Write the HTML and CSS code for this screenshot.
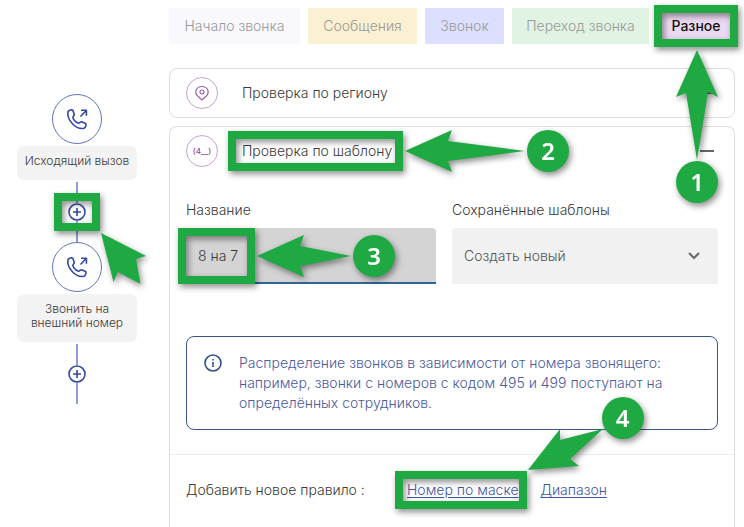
FILE: index.html
```html
<!DOCTYPE html>
<html lang="ru">
<head>
  <meta charset="UTF-8">
  <meta name="viewport" content="width=device-width, initial-scale=1.0">
  <title>Проверка по шаблону</title>
  <link rel="stylesheet" href="styles.css">
</head>
<body>
  <div class="page">
    <aside class="flow">
      <div class="flow-icon">
        <svg width="24" height="24" viewBox="0 0 24 24"><path d="M3 4.500C4 3 6.500 2.500 7.800 3.300L9.300 7.500C9.400 8.600 7.600 9.400 7.800 10.600C8.600 13 11 15.400 13.400 16.200C14.600 16.400 15.400 14.600 16.500 14.700L20.700 16.400C21.500 18 20.600 20.500 19 21.300C11 23 1.500 13 3 4.500Z"/><path d="M15.500 9.500L21.200 3.500M16 3.200H21.400V8.700"/></svg>
      </div>
      <div class="flow-label">Исходящий вызов</div>
      <div class="connector">
        <button class="add-step" aria-label="Добавить">
          <svg width="18" height="18" viewBox="0 0 18 18"><circle cx="9" cy="9" r="8"/><path d="M5 9H13M9 5V13"/></svg>
          <span class="mark mark-add">
            <svg class="arrow" width="46" height="52" viewBox="0 0 46 52"><path d="M0 0L45 23L35 26L39.500 51L17 39L12.500 49Z"/></svg>
          </span>
        </button>
      </div>
      <div class="flow-icon">
        <svg width="24" height="24" viewBox="0 0 24 24"><path d="M3 4.500C4 3 6.500 2.500 7.800 3.300L9.300 7.500C9.400 8.600 7.600 9.400 7.800 10.600C8.600 13 11 15.400 13.400 16.200C14.600 16.400 15.400 14.600 16.500 14.700L20.700 16.400C21.500 18 20.600 20.500 19 21.300C11 23 1.500 13 3 4.500Z"/><path d="M15.500 9.500L21.200 3.500M16 3.200H21.400V8.700"/></svg>
      </div>
      <div class="flow-label">Звонить на<br>внешний номер</div>
      <div class="connector">
        <button class="add-step" aria-label="Добавить">
          <svg width="18" height="18" viewBox="0 0 18 18"><circle cx="9" cy="9" r="8"/><path d="M5 9H13M9 5V13"/></svg>
        </button>
      </div>
    </aside>

    <main class="content">
      <nav class="tabs">
        <button class="tab tab-start">Начало звонка</button>
        <button class="tab tab-messages">Сообщения</button>
        <button class="tab tab-call">Звонок</button>
        <button class="tab tab-transfer">Переход звонка</button>
        <button class="tab tab-misc">Разное
          <span class="mark mark-tab">
            <svg class="arrow" width="42" height="110" viewBox="0 0 42 110"><path d="M21 0L42 47L32 42L21 110L10 43L0 47Z"/></svg>
            <span class="badge">1</span>
          </span>
        </button>
      </nav>

      <section class="card">
        <button class="card-header">
          <span class="card-icon">
            <svg width="16" height="16" viewBox="0 0 16 16"><path d="M8 15L3.500 10.800C0 7 2.500 1.500 8 1.500S16 7 12.500 10.800Z"/><circle cx="8" cy="7" r="2"/></svg>
          </span>
          <span>Проверка по региону</span>
          <span class="toggle"></span>
        </button>
      </section>

      <section class="card card-open">
        <button class="card-header">
          <span class="card-icon">(4__)</span>
          <span class="target">Проверка по шаблону
            <span class="mark mark-title">
              <svg class="arrow" width="120" height="42" viewBox="0 0 120 42"><path d="M0 21L47 0L43 11L120 21L43 31L47 42Z"/></svg>
              <span class="badge">2</span>
            </span>
          </span>
          <span class="toggle"></span>
        </button>

        <div class="fields">
          <div class="field field-name">
            <label for="name">Название</label>
            <div class="control">
              <input id="name" type="text" value="8 на 7">
              <span class="mark mark-input">
                <svg class="arrow" width="94" height="42" viewBox="0 0 94 42"><path d="M0 21L47 0L43 11L94 21L43 31L47 42Z"/></svg>
                <span class="badge">3</span>
              </span>
            </div>
          </div>
          <div class="field field-saved">
            <label for="saved">Сохранённые шаблоны</label>
            <div class="control">
              <select id="saved">
                <option>Создать новый</option>
              </select>
              <svg class="chevron" width="12" height="8" viewBox="0 0 12 8"><path d="M1 1L6 6L11 1"/></svg>
            </div>
          </div>
        </div>

        <div class="info">
          <svg class="info-icon" width="18" height="18" viewBox="0 0 18 18"><circle cx="9" cy="9" r="8"/><path d="M9 8V13M9 5V6.500"/></svg>
          <p>Распределение звонков в зависимости от номера звонящего: например, звонки с номеров с кодом 495 и 499 поступают на определённых сотрудников.</p>
        </div>

        <div class="rules">
          <span class="rules-title">Добавить новое правило :</span>
          <a class="target" href="#mask">Номер по маске<span class="mark mark-link">
              <svg class="arrow" width="76" height="42" viewBox="0 0 76 42"><path d="M0 41L32 0V11L75 0L42 30L51 37Z"/></svg>
              <span class="badge">4</span>
            </span></a>
          <a href="#range">Диапазон</a>
        </div>
      </section>
    </main>
  </div>
</body>
</html>
```

FILE: styles.css
```css
* {
  box-sizing: border-box;
}

body {
  margin: 0;
  background: #fff;
  color: #3a3a3a;
  font-family: Inter, 'Open Sans', sans-serif;
  font-size: 14px;
  font-weight: 300;
  line-height: 20px;
}

button,
input,
select {
  font: inherit;
  color: inherit;
  border: none;
}

button {
  cursor: pointer;
}

svg {
  display: block;
  fill: none;
}

.page {
  display: flex;
  gap: 32px;
  min-height: 100vh;
  padding: 8px 9px 0 17px;
}

/* call scheme */
.flow {
  flex: 0 0 120px;
  display: flex;
  flex-direction: column;
  align-items: center;
  padding-top: 86px;
}

.flow-icon {
  display: flex;
  align-items: center;
  justify-content: center;
  width: 50px;
  height: 50px;
  border: 1px solid #6274b5;
  border-radius: 50%;
}

.flow-icon svg {
  stroke: #3148a8;
  stroke-width: 1.6;
  stroke-linejoin: round;
}

.flow-label {
  width: 100%;
  margin: 2px 0;
  padding: 8px 4px 12px;
  border-radius: 7px;
  background: #f3f3f3;
  font-size: 12px;
  line-height: 14px;
  text-align: center;
}

.connector {
  display: flex;
  align-items: center;
  justify-content: center;
  width: 18px;
  height: 60px;
  background: linear-gradient(#909dd3, #909dd3) center / 2px 100% no-repeat;
}

.add-step {
  position: relative;
  padding: 0;
  border-radius: 50%;
  background: #fff;
}

.add-step > svg {
  stroke: #33489f;
  stroke-width: 1.6;
}

/* tabs */
.content {
  flex: 1;
  min-width: 0;
  display: flex;
  flex-direction: column;
  gap: 8px;
}

.tabs {
  display: flex;
  gap: 8px;
  margin-bottom: 16px;
}

.tab {
  position: relative;
  height: 36px;
  padding: 0;
  color: #999;
  white-space: nowrap;
}

.tab-start {
  flex: 131 1 0;
  background: #f8f8fd;
}

.tab-messages {
  flex: 109 1 0;
  background: #fbf0d2;
}

.tab-call {
  flex: 79 1 0;
  background: #dcdffd;
}

.tab-transfer {
  flex: 137 1 0;
  background: #e1f3e3;
}

.tab-misc {
  flex: 78 1 0;
  background: #ecd9f1;
  color: #111;
  font-weight: 500;
}

/* cards */
.card {
  border: 1px solid #dedede;
  border-radius: 8px;
}

.card-open {
  flex: 1;
  border-bottom: none;
  border-radius: 8px 8px 0 0;
}

.card-header {
  display: flex;
  align-items: center;
  gap: 24px;
  width: 100%;
  padding: 8px 20px 8px 16px;
  background: none;
  text-align: left;
}

.card-icon {
  display: flex;
  align-items: center;
  justify-content: center;
  width: 32px;
  height: 32px;
  border: 1px solid #c6a5d0;
  border-radius: 50%;
  color: #8d4aa3;
  font-size: 8px;
  font-weight: 500;
}

.card-icon svg {
  stroke: #9a62ac;
  stroke-width: 1.2;
}

.toggle {
  width: 14px;
  height: 2px;
  margin-left: auto;
  background: #666;
}

.fields {
  display: flex;
  gap: 16px;
  padding: 25px 16px 0;
}

.field {
  display: flex;
  flex-direction: column;
  gap: 8px;
  min-width: 0;
}

.field-name {
  flex: 250 1 0;
}

.field-saved {
  flex: 266 1 0;
}

.control {
  position: relative;
}

.control input,
.control select {
  display: block;
  width: 100%;
  height: 56px;
  padding: 0 12px;
  border-radius: 4px 4px 0 0;
  outline: none;
}

.control input {
  border-bottom: 2px solid #2f6399;
  background: #d4d4d4;
}

.control select {
  appearance: none;
  background: #f1f1f1;
  color: #555;
}

.chevron {
  position: absolute;
  top: 24px;
  right: 18px;
  stroke: #666;
  stroke-width: 2;
  pointer-events: none;
}

.info {
  display: flex;
  gap: 17px;
  margin: 52px 16px 24px;
  padding: 16px 16px 16px 17px;
  border: 1px solid #3c5488;
  border-radius: 8px;
  color: #4a5aa0;
}

.info p {
  margin: 0;
}

.info-icon {
  flex: none;
  margin-top: 1px;
  stroke: #33508c;
  stroke-width: 1.6;
}

.rules {
  display: flex;
  padding: 25px 16px;
  border-top: 1px solid #ededed;
}

.rules-title {
  flex: 0 0 221px;
}

.rules a {
  margin-right: 22px;
  color: #3f54a5;
  text-underline-offset: 2px;
}

/* numbered hints over the interface */
.target {
  position: relative;
}

.mark {
  position: absolute;
  z-index: 1;
  filter: drop-shadow(2px 3px 3px rgba(0, 0, 0, 0.45));
  pointer-events: none;
}

.mark::before {
  content: '';
  position: absolute;
  inset: 0;
  border: 8px solid #1fa942;
}

.arrow {
  position: absolute;
  fill: #1fa942;
}

.badge {
  position: absolute;
  width: 42px;
  height: 42px;
  border-radius: 50%;
  background: #1fa942;
  color: #fff;
  font: 600 24px/42px 'Noto Sans', sans-serif;
  text-align: center;
}

.mark-add {
  inset: -10px -14px;
}

.mark-add .arrow {
  top: calc(100% + 2px);
  left: calc(100% + 1px);
}

.mark-tab {
  inset: -3px;
}

.mark-tab .arrow {
  top: calc(100% + 3px);
  left: calc(50% - 20px);
}

.mark-tab .badge {
  top: calc(100% + 114px);
  left: calc(50% - 20px);
}

.mark-title {
  inset: -10px -11px -10px -14px;
}

.mark-title .arrow,
.mark-input .arrow {
  top: calc(50% - 21px);
  left: calc(100% + 2px);
}

.mark-title .badge {
  top: calc(50% - 21px);
  left: calc(100% + 124px);
}

.mark-input {
  top: 0;
  left: -8px;
  width: 77px;
  height: 56px;
}

.mark-input .badge {
  top: calc(50% - 21px);
  left: calc(100% + 98px);
}

.mark-link {
  inset: -9px -8px -9px -12px;
}

.mark-link .arrow {
  bottom: 100%;
  left: calc(100% + 1px);
}

.mark-link .badge {
  bottom: calc(100% + 32px);
  left: calc(100% + 75px);
}
```
